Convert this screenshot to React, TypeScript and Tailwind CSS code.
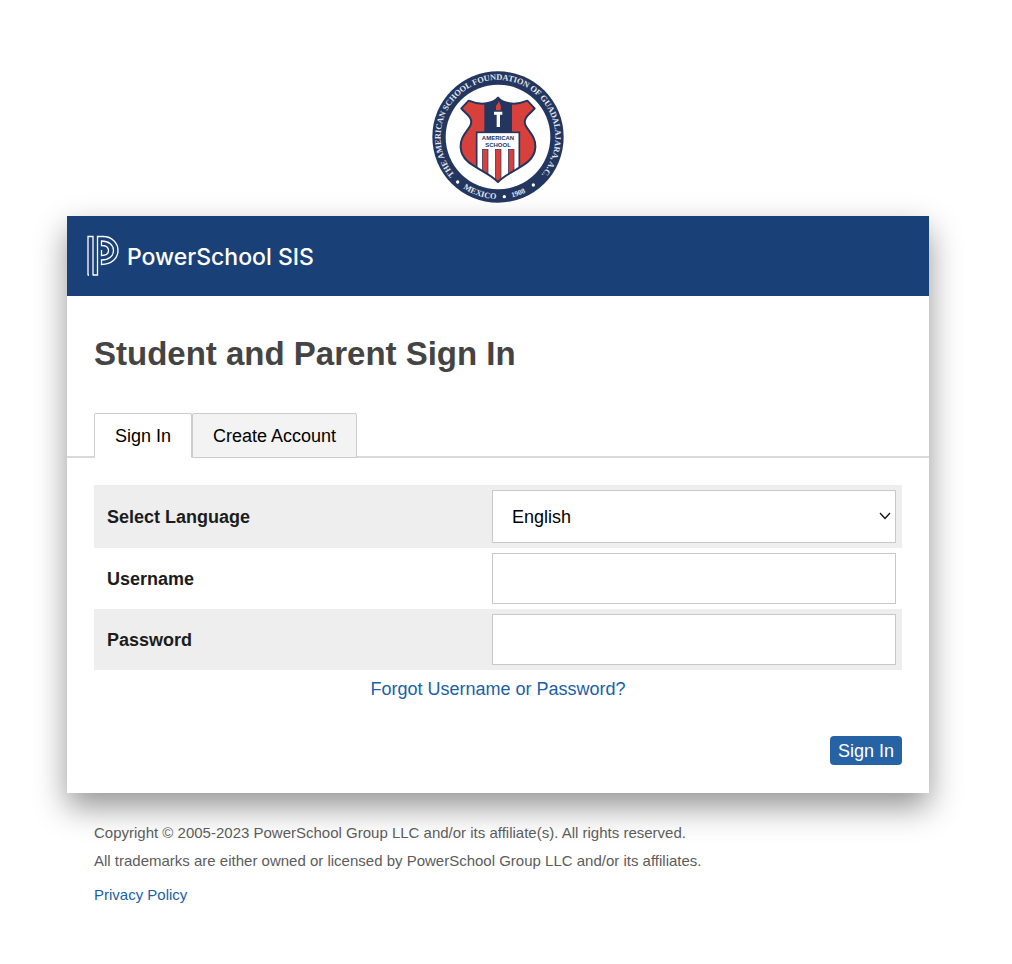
import React, { useState } from 'react'
import { clsx } from 'clsx'

const TABS = ['Sign In', 'Create Account']

const SHIELD = 'M198 80 C184 96 150 106 110 89 L88 112 C100 128 122 138 117 158 C112 178 84 192 86 230 C90 285 158 292 198 333 C238 292 306 285 310 230 C312 192 284 178 279 158 C274 138 296 128 308 112 L286 89 C246 106 212 96 198 80 Z'

const rowClass = 'grid grid-cols-[385fr_404fr] items-center py-[5px] pr-1.5 pl-[13px]'
const labelClass = 'text-lg font-bold text-[#1c1c1c]'
const fieldClass = 'block w-full rounded-none border border-[#c8c8c8] bg-white px-[19px] text-lg text-black outline-none focus:border-[#2663a5]'

function SchoolCrest() {
  return (
    <svg viewBox="0 0 396 396" className="block h-[132px] w-[132px]" role="img" aria-label="American School Foundation of Guadalajara">
      <defs>
        <path id="crest-top" d="M 74 318 A 172 172 0 1 1 322 318" />
        <path id="crest-bottom" d="M 12 198 A 186 186 0 0 0 384 198" />
        <clipPath id="crest-shield">
          <path d={SHIELD} />
        </clipPath>
      </defs>
      <circle cx="198" cy="198" r="197" fill="#22365f" />
      <circle cx="198" cy="198" r="157" fill="#fff" />
      <g fill="#e4e8f0" fontFamily="'Liberation Serif', serif" fontWeight="700" fontSize="25">
        <text textAnchor="middle">
          <textPath href="#crest-top" startOffset="50%">THE AMERICAN SCHOOL FOUNDATION OF GUADALAJARA, A.C.</textPath>
        </text>
        <text textAnchor="middle">
          <textPath href="#crest-bottom" startOffset="40%">MEXICO</textPath>
        </text>
        <text textAnchor="middle" fontSize="22">
          <textPath href="#crest-bottom" startOffset="61%">1908</textPath>
        </text>
      </g>
      <g fill="#fff">
        <circle cx="77" cy="333" r="5" />
        <circle cx="217" cy="377" r="5" />
        <circle cx="304" cy="342" r="5" />
      </g>
      <g clipPath="url(#crest-shield)">
        <rect x="80" y="75" width="236" height="265" fill="#d8403c" />
        <rect x="157" y="75" width="83" height="112" fill="#22365f" />
        <rect x="134" y="184" width="128" height="156" fill="#fff" stroke="#22365f" strokeWidth="5" />
        <g fill="#d8403c" stroke="#22365f" strokeWidth="2">
          <rect x="151" y="235" width="17" height="100" />
          <rect x="190" y="235" width="17" height="100" />
          <rect x="229" y="235" width="17" height="100" />
        </g>
      </g>
      <path d={SHIELD} fill="none" stroke="#22365f" strokeWidth="6" strokeLinejoin="round" />
      <path d="M192 118 V108 C192 101 200 99 200 90 C206 99 208 107 206 118 Z" fill="#d8403c" />
      <path d="M186 122 H211 V131 H204 V168 H194 V131 H186 Z" fill="#fff" />
      <g fill="#22365f" fontFamily="'Liberation Sans', sans-serif" fontWeight="700" fontSize="18" textAnchor="middle">
        <text x="198" y="206">AMERICAN</text>
        <text x="198" y="228">SCHOOL</text>
      </g>
    </svg>
  )
}

function PowerSchoolMark() {
  return (
    <svg viewBox="0 0 32 42" className="h-[42px] w-8" fill="none" stroke="#fff" strokeWidth="1.3" aria-hidden="true">
      <path d="M1 40.500 V1.500 H6 V40.500" />
      <path d="M1 40 H2" />
      <path d="M6 40 H10.500 V1.500 H16 C25 1.500 31 8 31 15.500 C31 23 25 29.500 14.500 29.500 V25 C22 25 26.500 21 26.500 15.500 C26.500 10 22 6 14.500 6 V10.500 C19 10.500 21.500 12.500 21.500 15.500 C21.500 18.500 19 20.500 14.500 20.500 V15" />
    </svg>
  )
}

export default function App() {
  const [activeTab, setActiveTab] = useState('Sign In')

  return (
    <div className="bg-white pt-[71px] pr-[83px] pb-[58px] pl-[67px] font-['Liberation_Sans',Arial,sans-serif] text-black">
      <div className="flex justify-center">
        <SchoolCrest />
      </div>

      <main className="mt-[13px] bg-white shadow-[0_14px_30px_rgba(0,0,0,0.42)]">
        <header className="flex h-20 items-center gap-2 bg-[#1a4177] px-5">
          <PowerSchoolMark />
          <span className="pt-0.5 font-['Inter',sans-serif] text-[23px] font-medium text-white">PowerSchool SIS</span>
        </header>

        <h1 className="px-[27px] pt-9 text-[33px] leading-11 font-bold text-[#444]">Student and Parent Sign In</h1>

        <div role="tablist" className="mt-[37px] flex border-b-2 border-[#d9d9d9] px-[27px]">
          {TABS.map((tab) => (
            <button
              key={tab}
              type="button"
              role="tab"
              aria-selected={activeTab === tab}
              onClick={() => setActiveTab(tab)}
              className={clsx(
                '-mb-0.5 h-[45px] rounded-t-xs border px-5 text-lg',
                activeTab === tab ? 'border-[#ccc] border-b-white bg-white' : 'border-[#ccc] bg-[#f3f3f3]'
              )}
            >
              {tab}
            </button>
          ))}
        </div>

        <form className="px-[27px] pt-[27px] pb-7" onSubmit={(e) => e.preventDefault()}>
          <div className={clsx(rowClass, 'bg-[#eee]')}>
            <label htmlFor="language" className={labelClass}>Select Language</label>
            <div className="relative">
              <select id="language" className={clsx(fieldClass, 'h-[53px] appearance-none')}>
                <option>English</option>
              </select>
              <svg viewBox="0 0 12 8" className="pointer-events-none absolute top-[22px] right-[5px] h-2 w-3" fill="none" stroke="#111" strokeWidth="1.3" aria-hidden="true">
                <path d="M1 1 L6 6.500 L11 1" />
              </svg>
            </div>
          </div>
          <div className={rowClass}>
            <label htmlFor="username" className={labelClass}>Username</label>
            <input id="username" type="text" className={clsx(fieldClass, 'h-[51px]')} />
          </div>
          <div className={clsx(rowClass, 'bg-[#eee]')}>
            <label htmlFor="password" className={labelClass}>Password</label>
            <input id="password" type="password" className={clsx(fieldClass, 'h-[51px]')} />
          </div>

          <p className="mt-[5px] text-center text-lg leading-7">
            <a href="#forgot" className="text-[#1b5fa6]">Forgot Username or Password?</a>
          </p>

          <div className="mt-[33px] flex justify-end">
            <button type="submit" className="h-[29px] rounded bg-[#2663a5] px-2 text-lg leading-7 text-white">Sign In</button>
          </div>
        </form>
      </main>

      <footer className="relative px-[27px] pt-[26px] text-[15px] leading-7 text-[#5c5c5c]">
        <p>Copyright © 2005-2023 PowerSchool Group LLC and/or its affiliate(s). All rights reserved.</p>
        <p>All trademarks are either owned or licensed by PowerSchool Group LLC and/or its affiliates.</p>
        <p className="mt-1.5">
          <a href="#privacy" className="text-[#1b5fa6]">Privacy Policy</a>
        </p>
      </footer>
    </div>
  )
}
